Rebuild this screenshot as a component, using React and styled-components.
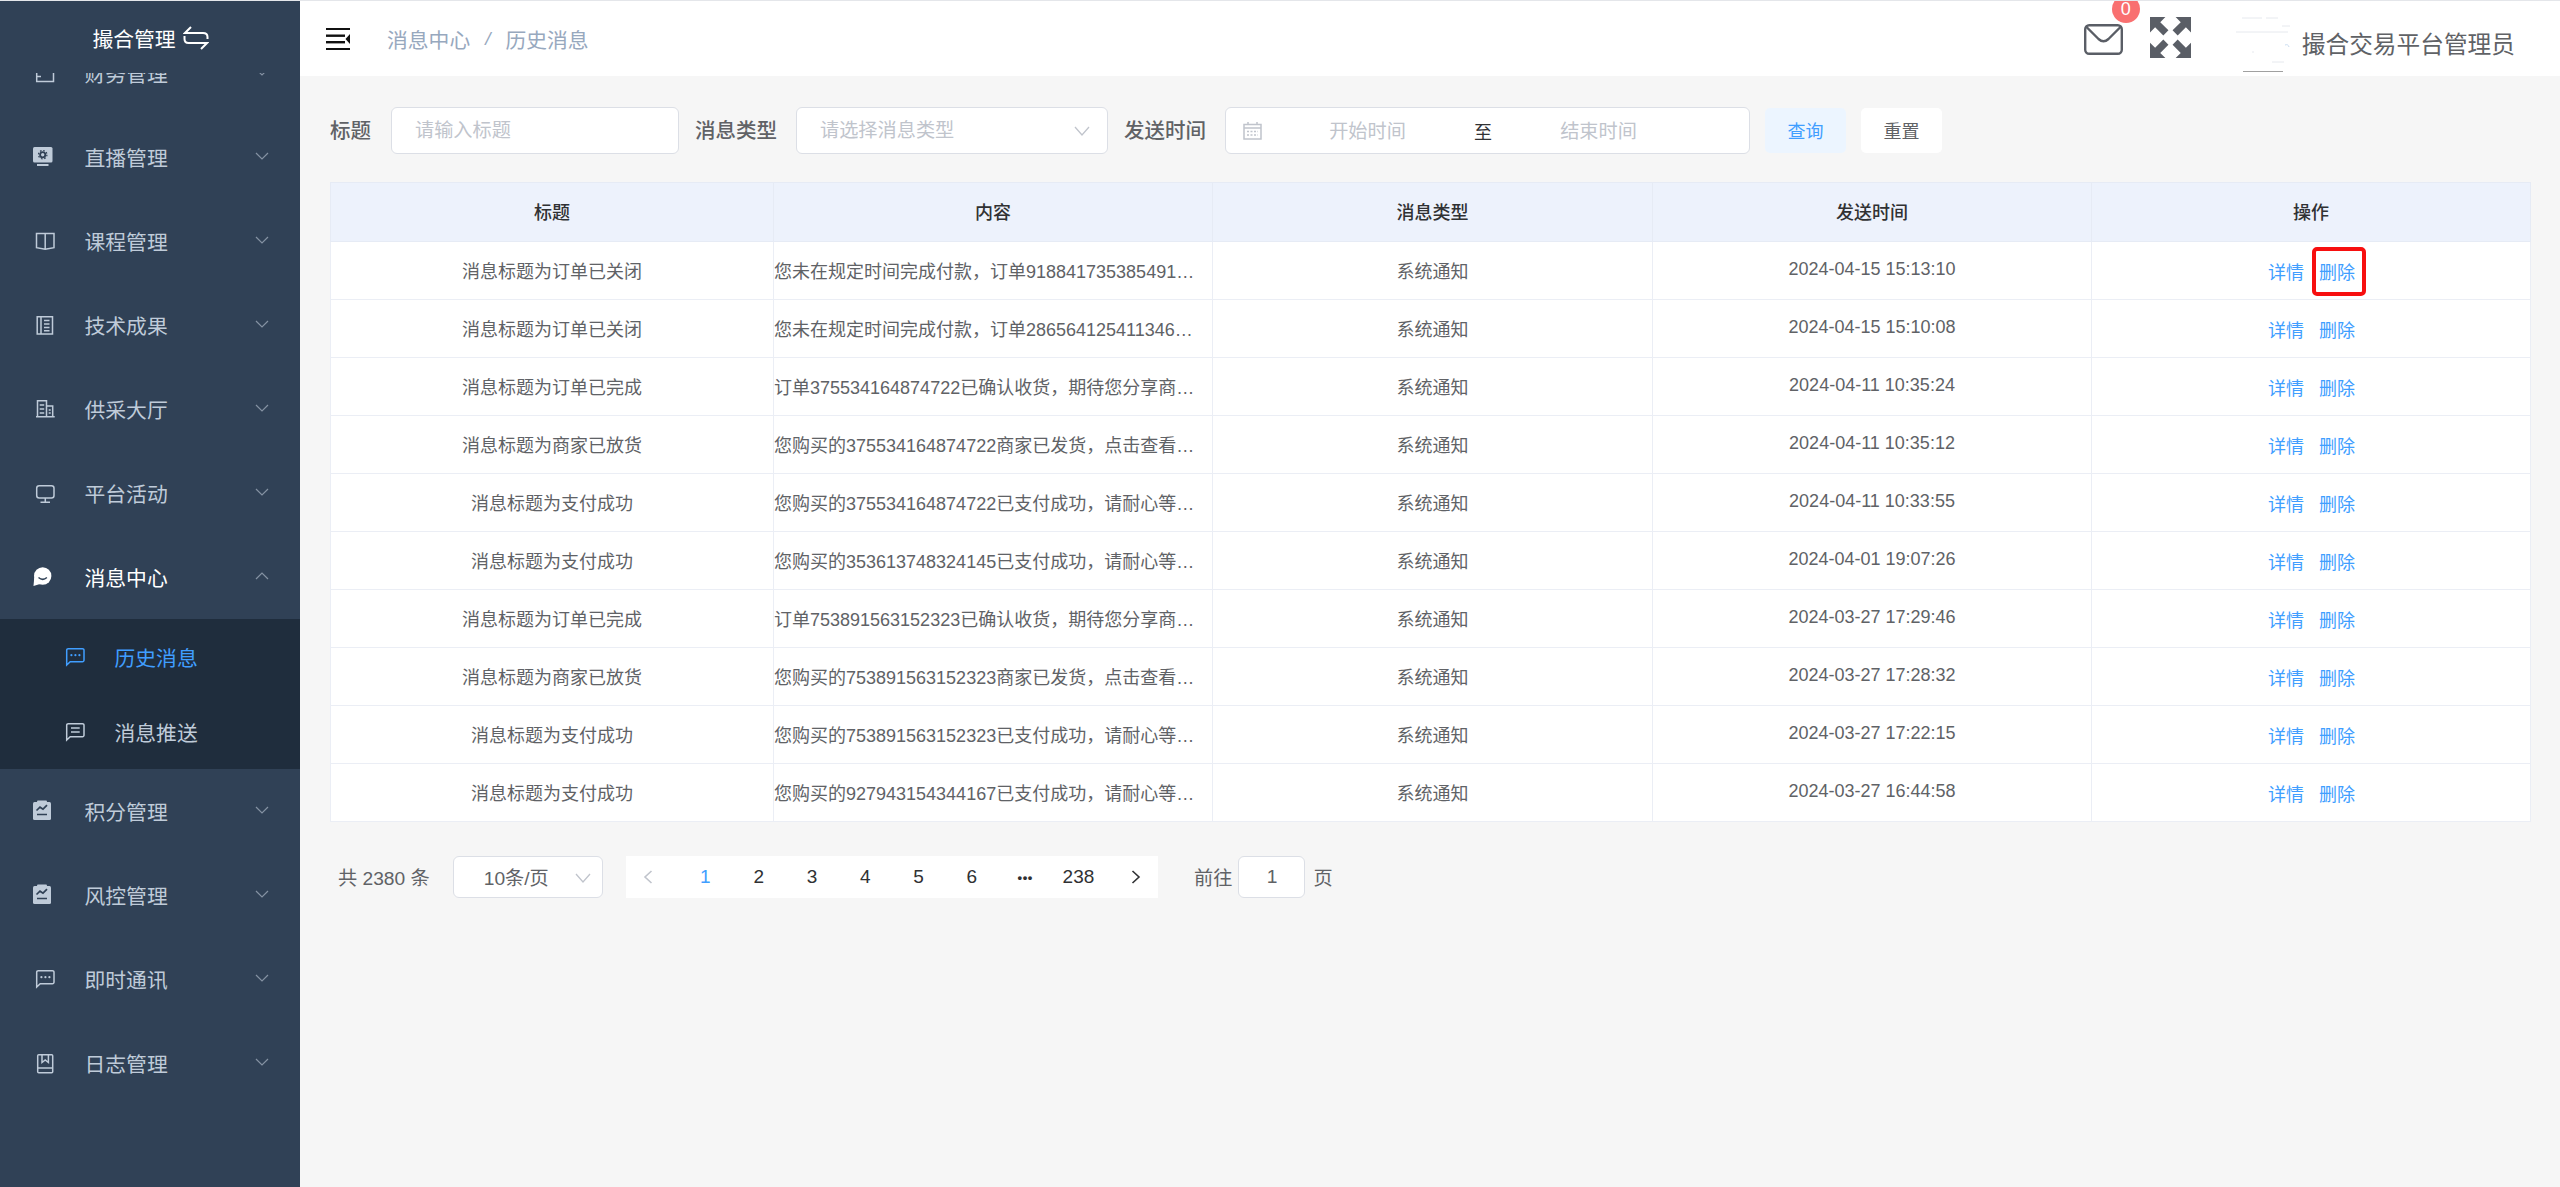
import React from "react";
import styled, { createGlobalStyle } from "styled-components";

const GlobalStyle = createGlobalStyle`
    html, body {
        margin: 0;
        padding: 0;
        background: #f6f6f6;
    }
    body {
        font-family: "Liberation Sans", "Noto Sans CJK SC", sans-serif;
        color: #606266;
    }
    * {
        box-sizing: border-box;
    }
`

const Page = styled.div`
    display: flex;
    height: 1187px;
    overflow: hidden;
    border-top: 1px solid #e4e6ea;
`
const Side = styled.aside`
    width: 300px;
    flex-shrink: 0;
    display: flex;
    flex-direction: column;
    background-color: #304156;
`
const Logo = styled.div`
    height: 72px;
    flex-shrink: 0;
    display: flex;
    align-items: center;
    justify-content: center;
    gap: 7px;
    color: #fff;
    font-size: 20.8px;
    padding: 2px 0 0 1px;
    position: relative;
    z-index: 1;
    background-color: #304156;
`
const MenuScroll = styled.div`
    flex: 1;
    overflow: hidden;
`
const Menu = styled.div`
    margin-top: -42px;
`
const MenuItem = styled.div`
    height: 84px;
    display: flex;
    align-items: center;
    padding-left: 33px;
    font-size: 20.8px;
    color: ${(props) => (props.$open ? "#fff" : "#bfcbd9")};
`
const SubMenu = styled.div`
    background-color: #1f2d3d;
`
const SubItem = styled.div`
    height: 75px;
    display: flex;
    align-items: center;
    padding-left: 63px;
    font-size: 20.8px;
    color: ${(props) => (props.$active ? "#409eff" : "#bfcbd9")};
`
const MenuText = styled.span`
    margin-left: 29.5px;
    flex: 1;
`
const Arrow = styled.svg`
    width: 14px;
    height: 8px;
    margin: 0 31px 3px 0;
    fill: none;
    stroke: #8592a3;
    stroke-width: 1.2;
    transform: ${(props) => (props.$up ? "rotate(180deg)" : "none")};
`
const MenuIcon = styled.svg`
    width: 22px;
    height: 22px;
    flex-shrink: 0;
    overflow: visible;
    fill: none;
    stroke: currentColor;
    stroke-width: 1.5;
`

const Main = styled.main`
    flex: 1;
    min-width: 0;
    display: flex;
    flex-direction: column;
`
const TopBar = styled.header`
    height: 75px;
    flex-shrink: 0;
    display: flex;
    align-items: center;
    background-color: #fff;
    padding: 0 45px 0 26px;
`
const Crumbs = styled.div`
    display: flex;
    align-items: center;
    margin-left: 37px;
    font-size: 20.8px;
    color: #97a8be;
`
const CrumbSep = styled.span`
    margin: 0 15px;
    font-size: 19px;
    font-style: italic;
`
const TopRight = styled.div`
    margin-left: auto;
    display: flex;
    align-items: center;
`
const Mail = styled.div`
    position: relative;
    width: 39px;
    height: 31px;
    margin: 1px 27px 0 0;
`
const Badge = styled.span`
    position: absolute;
    left: 28px;
    top: -29px;
    width: 28px;
    height: 28px;
    border-radius: 50%;
    background-color: #f97070;
    color: #fff;
    font-size: 18px;
    line-height: 29px;
    text-align: center;
`
const FullIcon = styled.svg`
    width: 41px;
    height: 41px;
    margin: -2px 41px 0 0;
    fill: #5a5e66;
`
const Avatar = styled.svg`
    width: 61px;
    height: 60px;
    margin: 7px 9px 0 0;
`
const UserName = styled.span`
    font-size: 23.7px;
    color: #606266;
    padding-top: 9px;
`

const Content = styled.section`
    padding: 30px 30px 0;
`
const Filter = styled.form`
    display: flex;
    align-items: center;
    height: 48px;
    margin-bottom: 28px;
`
const Label = styled.label`
    font-size: 20.5px;
    font-weight: 500;
    color: #606266;
    white-space: nowrap;
    padding-bottom: 2px;
    margin: 0 ${(props) => props.$gap}px 0 ${(props) => props.$left}px;
`
const Field = styled.div`
    position: relative;
    width: ${(props) => props.$width}px;
    height: 47px;
    margin-top: ${(props) => props.$drop || 0}px;
    display: flex;
    align-items: center;
    background-color: #fff;
    border: 1px solid #dcdfe6;
    border-radius: 6px;
`
const Input = styled.input`
    width: 100%;
    min-width: 0;
    height: 100%;
    border: 0;
    outline: 0;
    background: transparent;
    padding: 2px 23px 0;
    font: inherit;
    font-size: 19.2px;
    color: #606266;
    text-align: ${(props) => props.$align || "left"};
    &::placeholder {
        color: #c0c4cc;
        opacity: 1;
    }
`
const RangeInput = styled(Input)`
    flex: 0 0 201px;
    padding: 2px 2px 0 0;
`
const RangeSep = styled.span`
    flex: 0 0 30px;
    text-align: center;
    font-size: 18px;
    color: #303133;
    padding-right: 2px;
`
const CalIcon = styled.svg`
    width: 19px;
    height: 19px;
    margin: 0 6px 0 17px;
    flex-shrink: 0;
    fill: none;
    stroke: #c0c4cc;
    stroke-width: 1.5;
`
const SelectArrow = styled.svg`
    position: absolute;
    right: ${(props) => props.$right}px;
    top: 50%;
    margin-top: -4px;
    width: 16px;
    height: 10px;
    fill: none;
    stroke: #c0c4cc;
    stroke-width: 1.3;
`
const Btn = styled.button`
    width: 81px;
    height: 45px;
    margin-left: 15px;
    border: 0;
    border-radius: 5px;
    font: inherit;
    font-size: 18px;
    background-color: ${(props) => (props.$primary ? "#ecf5ff" : "#fff")};
    color: ${(props) => (props.$primary ? "#409eff" : "#606266")};
`

const Table = styled.table`
    width: 2200px;
    table-layout: fixed;
    border-collapse: collapse;
    background-color: #fff;
    font-size: 18px;
    border: 1px solid #ebeef5;
`
const Th = styled.th`
    height: 59px;
    padding: 0 0 3px;
    font-weight: 500;
    color: #303133;
    background-color: #edf2fc;
    border: 1px solid #e6ebf5;
`
const Td = styled.td`
    height: 58px;
    padding: 0 0 2px;
    text-align: center;
    color: #606266;
    white-space: nowrap;
    border: 1px solid #ebeef5;
`
const ContentCell = styled(Td)`
    text-align: left;
`
const Ops = styled.div`
    display: flex;
    justify-content: center;
    gap: 15px;
    padding: 2px 0 0 1px;
`
const OpLink = styled.a`
    position: relative;
    color: #409eff;
    cursor: pointer;
    ${(props) => props.$marked && `
        &::after {
            content: "";
            position: absolute;
            left: -7px;
            right: -11px;
            top: -11px;
            bottom: -12px;
            border: 4px solid #f70f0f;
            border-radius: 5px;
        }
    `}
`

const Pagination = styled.div`
    display: flex;
    align-items: center;
    height: 42px;
    margin-top: 34px;
    padding-left: 8px;
    font-size: 19.2px;
    color: #606266;
`
const Total = styled.span`
    margin-right: 23px;
`
const SizeSelect = styled.div`
    position: relative;
    width: 150px;
    height: 42px;
    display: flex;
    align-items: center;
    padding-left: 30px;
    background-color: #fff;
    border: 1px solid #dcdfe6;
    border-radius: 6px;
`
const Pager = styled.ul`
    display: flex;
    align-items: center;
    height: 42px;
    margin: 0 36px 0 23px;
    padding: 0;
    list-style: none;
    background-color: #fff;
`
const PageNum = styled.li`
    width: 53.3px;
    text-align: center;
    font-size: 19px;
    color: ${(props) => (props.$active ? "#409eff" : "#303133")};
`
const Dots = styled(PageNum)`
    font-size: 13px;
    font-weight: bold;
    letter-spacing: 0.5px;
`
const PageArrow = styled.li`
    width: 53px;
    display: flex;
    justify-content: ${(props) => (props.$next ? "flex-end" : "flex-start")};
    padding: ${(props) => (props.$next ? "0 17px 0 0" : "0 0 0 17px")};
`
const Chevron = styled.svg`
    width: 10px;
    height: 14px;
    fill: none;
    stroke: ${(props) => (props.$off ? "#c0c4cc" : "#303133")};
    stroke-width: 1.6;
`
const GotoInput = styled(Field)`
    height: 42px;
    margin: 0 8px 0 6px;
`
const GotoValue = styled(Input)`
    padding: 0;
    text-align: center;
`

const LiveIcon = () => (
    <MenuIcon viewBox="0 0 22 22">
        <rect x="0" y="1" width="19.5" height="15.5" rx="1.5" fill="currentColor" stroke="none" />
        <rect x="4" y="18" width="11.5" height="2" fill="currentColor" stroke="none" />
        <circle cx="9.7" cy="8.7" r="2.6" stroke="#304156" strokeWidth="1.8" />
        <circle cx="9.7" cy="8.7" r="4.2" stroke="#304156" strokeWidth="1.2" strokeDasharray="1.6 1.7" />
    </MenuIcon>
);
const WalletIcon = () => (
    <MenuIcon viewBox="0 0 22 22">
        <path d="M3.7 1.5H20.5V19.5H3.7Z M3.7 14.5H8" />
    </MenuIcon>
);
const BookIcon = () => (
    <MenuIcon viewBox="0 0 22 22">
        <path d="M3.5 3.5H21V17.7L12.2 19.2L3.5 17.7Z M12.2 3.5V19.2" />
    </MenuIcon>
);
const NoteIcon = () => (
    <MenuIcon viewBox="0 0 22 22">
        <path d="M4.2 2.7H19.5V20H4.2Z M8 2.7V20 M11 6.5H16.5 M11 10H16.5 M11 13.5H16.5 M11 16.7H16.5" />
    </MenuIcon>
);
const OfficeIcon = () => (
    <MenuIcon viewBox="0 0 22 22">
        <path d="M3 18.7H21.7 M4.5 18.7V2.7H13.5V18.7 M13.5 8H19.7V18.7 M6.7 7H11.2 M6.7 11H11.2 M6.7 15H11.2 M15.7 12H17.7 M15.7 15H17.7" />
    </MenuIcon>
);
const MonitorIcon = () => (
    <MenuIcon viewBox="0 0 22 22">
        <rect x="3.7" y="3.7" width="17.3" height="12.3" rx="2.5" />
        <path d="M12.3 16V20 M7.5 20.2H17" />
    </MenuIcon>
);
const ChatRoundIcon = () => (
    <MenuIcon viewBox="0 0 22 22">
        <circle cx="9.7" cy="10" r="8.7" fill="currentColor" stroke="none" />
        <path d="M1.3 11L0.5 20L7 18Z" fill="currentColor" stroke="none" />
        <path d="M5.5 11.5Q9.7 15.2 13.9 11.5" stroke="#304156" strokeWidth="1.5" />
    </MenuIcon>
);
const ChartClipIcon = () => (
    <MenuIcon viewBox="0 0 22 22">
        <rect x="0" y="2" width="18" height="18" rx="1.5" fill="currentColor" stroke="none" />
        <rect x="4" y="0.5" width="10" height="3" rx="1" fill="currentColor" stroke="none" />
        <path d="M3.5 10.5L7 7.2L10 9.2L14 5.2 M4 14.5H14" stroke="#304156" strokeWidth="1.7" />
    </MenuIcon>
);
const ChatDotIcon = () => (
    <MenuIcon viewBox="0 0 22 22">
        <path d="M5.2 2.7H19.5A1.5 1.5 0 0 1 21 4.2V14.2A1.5 1.5 0 0 1 19.5 15.7H7.2L3.7 19V4.2A1.5 1.5 0 0 1 5.2 2.7Z" />
        <circle cx="8.4" cy="9.2" r="1.1" fill="currentColor" stroke="none" />
        <circle cx="12.4" cy="9.2" r="1.1" fill="currentColor" stroke="none" />
        <circle cx="16.4" cy="9.2" r="1.1" fill="currentColor" stroke="none" />
    </MenuIcon>
);
const ChatLineIcon = () => (
    <MenuIcon viewBox="0 0 22 22">
        <path d="M5.2 2.7H19.5A1.5 1.5 0 0 1 21 4.2V14.2A1.5 1.5 0 0 1 19.5 15.7H7.2L3.7 19V4.2A1.5 1.5 0 0 1 5.2 2.7Z" />
        <path d="M8 7H16.7 M8 11H16.7" />
    </MenuIcon>
);
const CollectionIcon = () => (
    <MenuIcon viewBox="0 0 22 22">
        <rect x="4.7" y="2.7" width="15" height="18" rx="1" />
        <path d="M4.7 16H19.7 M9 2.7V10.5L12.2 8L15.4 10.5V2.7" />
    </MenuIcon>
);

const SwapIcon = () => (
    <svg width="26" height="24" viewBox="0 0 26 24" fill="none" stroke="#fff" strokeWidth="2">
        <path d="M8 1L2 7H20Q24.5 7 24.5 11V13" />
        <path d="M1.5 10V13Q1.5 17 5.5 17H24L18 23" />
    </svg>
);
const Hamburger = () => (
    <svg width="24" height="22" viewBox="0 0 24 22" fill="#111">
        <rect x="0" y="0" width="24" height="2" />
        <rect x="0" y="6.5" width="19" height="2.4" />
        <rect x="0" y="13" width="19" height="2.4" />
        <rect x="0" y="20" width="24" height="2" />
        <path d="M24 6L19.5 11L24 16Z" />
    </svg>
);
const ArrowDown = () => (
    <Arrow viewBox="0 0 14 8">
        <path d="M1 1L7 7L13 1" />
    </Arrow>
);
const ArrowUp = () => (
    <Arrow viewBox="0 0 14 8" $up>
        <path d="M1 1L7 7L13 1" />
    </Arrow>
);
const PickArrow = ({ right }) => (
    <SelectArrow viewBox="0 0 16 10" $right={right}>
        <path d="M1 1L8 9L15 1" />
    </SelectArrow>
);

const menuTop = [
    ["财务管理", WalletIcon],
    ["直播管理", LiveIcon],
    ["课程管理", BookIcon],
    ["技术成果", NoteIcon],
    ["供采大厅", OfficeIcon],
    ["平台活动", MonitorIcon],
];
const menuBottom = [
    ["积分管理", ChartClipIcon],
    ["风控管理", ChartClipIcon],
    ["即时通讯", ChatDotIcon],
    ["日志管理", CollectionIcon],
];

const rows = [
    ["消息标题为订单已关闭", "您未在规定时间完成付款，订单918841735385491…", "2024-04-15 15:13:10"],
    ["消息标题为订单已关闭", "您未在规定时间完成付款，订单286564125411346…", "2024-04-15 15:10:08"],
    ["消息标题为订单已完成", "订单375534164874722已确认收货，期待您分享商…", "2024-04-11 10:35:24"],
    ["消息标题为商家已放货", "您购买的375534164874722商家已发货，点击查看…", "2024-04-11 10:35:12"],
    ["消息标题为支付成功", "您购买的375534164874722已支付成功，请耐心等…", "2024-04-11 10:33:55"],
    ["消息标题为支付成功", "您购买的353613748324145已支付成功，请耐心等…", "2024-04-01 19:07:26"],
    ["消息标题为订单已完成", "订单753891563152323已确认收货，期待您分享商…", "2024-03-27 17:29:46"],
    ["消息标题为商家已放货", "您购买的753891563152323商家已发货，点击查看…", "2024-03-27 17:28:32"],
    ["消息标题为支付成功", "您购买的753891563152323已支付成功，请耐心等…", "2024-03-27 17:22:15"],
    ["消息标题为支付成功", "您购买的927943154344167已支付成功，请耐心等…", "2024-03-27 16:44:58"],
];

const App = () => {
    return (
        <Page>
            <GlobalStyle />
            <Side>
                <Logo>
                    撮合管理
                    <SwapIcon />
                </Logo>
                <MenuScroll>
                    <Menu>
                        {menuTop.map(([name, Icon]) => (
                            <MenuItem key={name}>
                                <Icon />
                                <MenuText>{name}</MenuText>
                                <ArrowDown />
                            </MenuItem>
                        ))}
                        <MenuItem $open>
                            <ChatRoundIcon />
                            <MenuText>消息中心</MenuText>
                            <ArrowUp />
                        </MenuItem>
                        <SubMenu>
                            <SubItem $active>
                                <ChatDotIcon />
                                <MenuText>历史消息</MenuText>
                            </SubItem>
                            <SubItem>
                                <ChatLineIcon />
                                <MenuText>消息推送</MenuText>
                            </SubItem>
                        </SubMenu>
                        {menuBottom.map(([name, Icon]) => (
                            <MenuItem key={name}>
                                <Icon />
                                <MenuText>{name}</MenuText>
                                <ArrowDown />
                            </MenuItem>
                        ))}
                    </Menu>
                </MenuScroll>
            </Side>
            <Main>
                <TopBar>
                    <Hamburger />
                    <Crumbs>
                        消息中心
                        <CrumbSep>/</CrumbSep>
                        历史消息
                    </Crumbs>
                    <TopRight>
                        <Mail>
                            <svg width="39" height="31" viewBox="0 0 39 31" fill="none" stroke="#5a5e66" strokeWidth="2.4">
                                <rect x="1.2" y="1.2" width="36.6" height="28.6" rx="4" />
                                <path d="M2 2.5L14.5 15Q19.5 19.5 24.5 15L37 2.5" />
                            </svg>
                            <Badge>0</Badge>
                        </Mail>
                        <FullIcon viewBox="0 0 40 40">
                            <path d="M0 0H15L10 5L18 13L13 18L5 10L0 15Z" />
                            <path d="M40 0H25L30 5L22 13L27 18L35 10L40 15Z" />
                            <path d="M0 40H15L10 35L18 27L13 22L5 30L0 25Z" />
                            <path d="M40 40H25L30 35L22 27L27 22L35 30L40 25Z" />
                        </FullIcon>
                        <Avatar viewBox="0 0 61 60">
                            <path d="M10 6H30 M34 6H46 M50 14H58 M4 20H56 M20 40H22 M40 50H52" stroke="#e6e9ee" strokeWidth="1" />
                            <path d="M53 33A3 3 0 0 1 57 35" stroke="#c9dcf0" strokeWidth="1" fill="none" />
                            <path d="M11 59.5H51" stroke="#a0a0a0" strokeWidth="1" />
                        </Avatar>
                        <UserName>撮合交易平台管理员</UserName>
                    </TopRight>
                </TopBar>
                <Content>
                    <Filter>
                        <Label $left={0} $gap={20}>标题</Label>
                        <Field $width={288}>
                            <Input placeholder="请输入标题" />
                        </Field>
                        <Label $left={16} $gap={19}>消息类型</Label>
                        <Field $width={312}>
                            <Input placeholder="请选择消息类型" readOnly />
                            <PickArrow right={17} />
                        </Field>
                        <Label $left={16} $gap={19}>发送时间</Label>
                        <Field $width={525} $drop={1}>
                            <CalIcon viewBox="0 0 19 19">
                                <path d="M1 3.5H18V18H1Z M1 7H18 M5 1V4 M14 1V4" />
                                <path d="M4 10.5H15 M4 14H15" strokeDasharray="2 1.5" />
                            </CalIcon>
                            <RangeInput placeholder="开始时间" $align="center" />
                            <RangeSep>至</RangeSep>
                            <RangeInput placeholder="结束时间" $align="center" />
                        </Field>
                        <Btn type="button" $primary>查询</Btn>
                        <Btn type="button">重置</Btn>
                    </Filter>
                    <Table>
                        <colgroup>
                            <col style={{ width: 443 }} />
                            <col style={{ width: 439 }} />
                            <col style={{ width: 440 }} />
                            <col style={{ width: 439 }} />
                            <col style={{ width: 439 }} />
                        </colgroup>
                        <thead>
                            <tr>
                                <Th>标题</Th>
                                <Th>内容</Th>
                                <Th>消息类型</Th>
                                <Th>发送时间</Th>
                                <Th>操作</Th>
                            </tr>
                        </thead>
                        <tbody>
                            {rows.map((row, i) => (
                                <tr key={row[2]}>
                                    <Td>{row[0]}</Td>
                                    <ContentCell>{row[1]}</ContentCell>
                                    <Td>系统通知</Td>
                                    <Td>{row[2]}</Td>
                                    <Td>
                                        <Ops>
                                            <OpLink>详情</OpLink>
                                            <OpLink $marked={i === 0}>删除</OpLink>
                                        </Ops>
                                    </Td>
                                </tr>
                            ))}
                        </tbody>
                    </Table>
                    <Pagination>
                        <Total>共 2380 条</Total>
                        <SizeSelect>
                            10条/页
                            <PickArrow right={11} />
                        </SizeSelect>
                        <Pager>
                            <PageArrow>
                                <Chevron viewBox="0 0 10 14" $off>
                                    <path d="M8.5 1L2 7L8.5 13" />
                                </Chevron>
                            </PageArrow>
                            <PageNum $active>1</PageNum>
                            <PageNum>2</PageNum>
                            <PageNum>3</PageNum>
                            <PageNum>4</PageNum>
                            <PageNum>5</PageNum>
                            <PageNum>6</PageNum>
                            <Dots>•••</Dots>
                            <PageNum>238</PageNum>
                            <PageArrow $next>
                                <Chevron viewBox="0 0 10 14">
                                    <path d="M1.5 1L8 7L1.5 13" />
                                </Chevron>
                            </PageArrow>
                        </Pager>
                        前往
                        <GotoInput $width={67}>
                            <GotoValue defaultValue="1" />
                        </GotoInput>
                        页
                    </Pagination>
                </Content>
            </Main>
        </Page>
    );
};

export default App;
